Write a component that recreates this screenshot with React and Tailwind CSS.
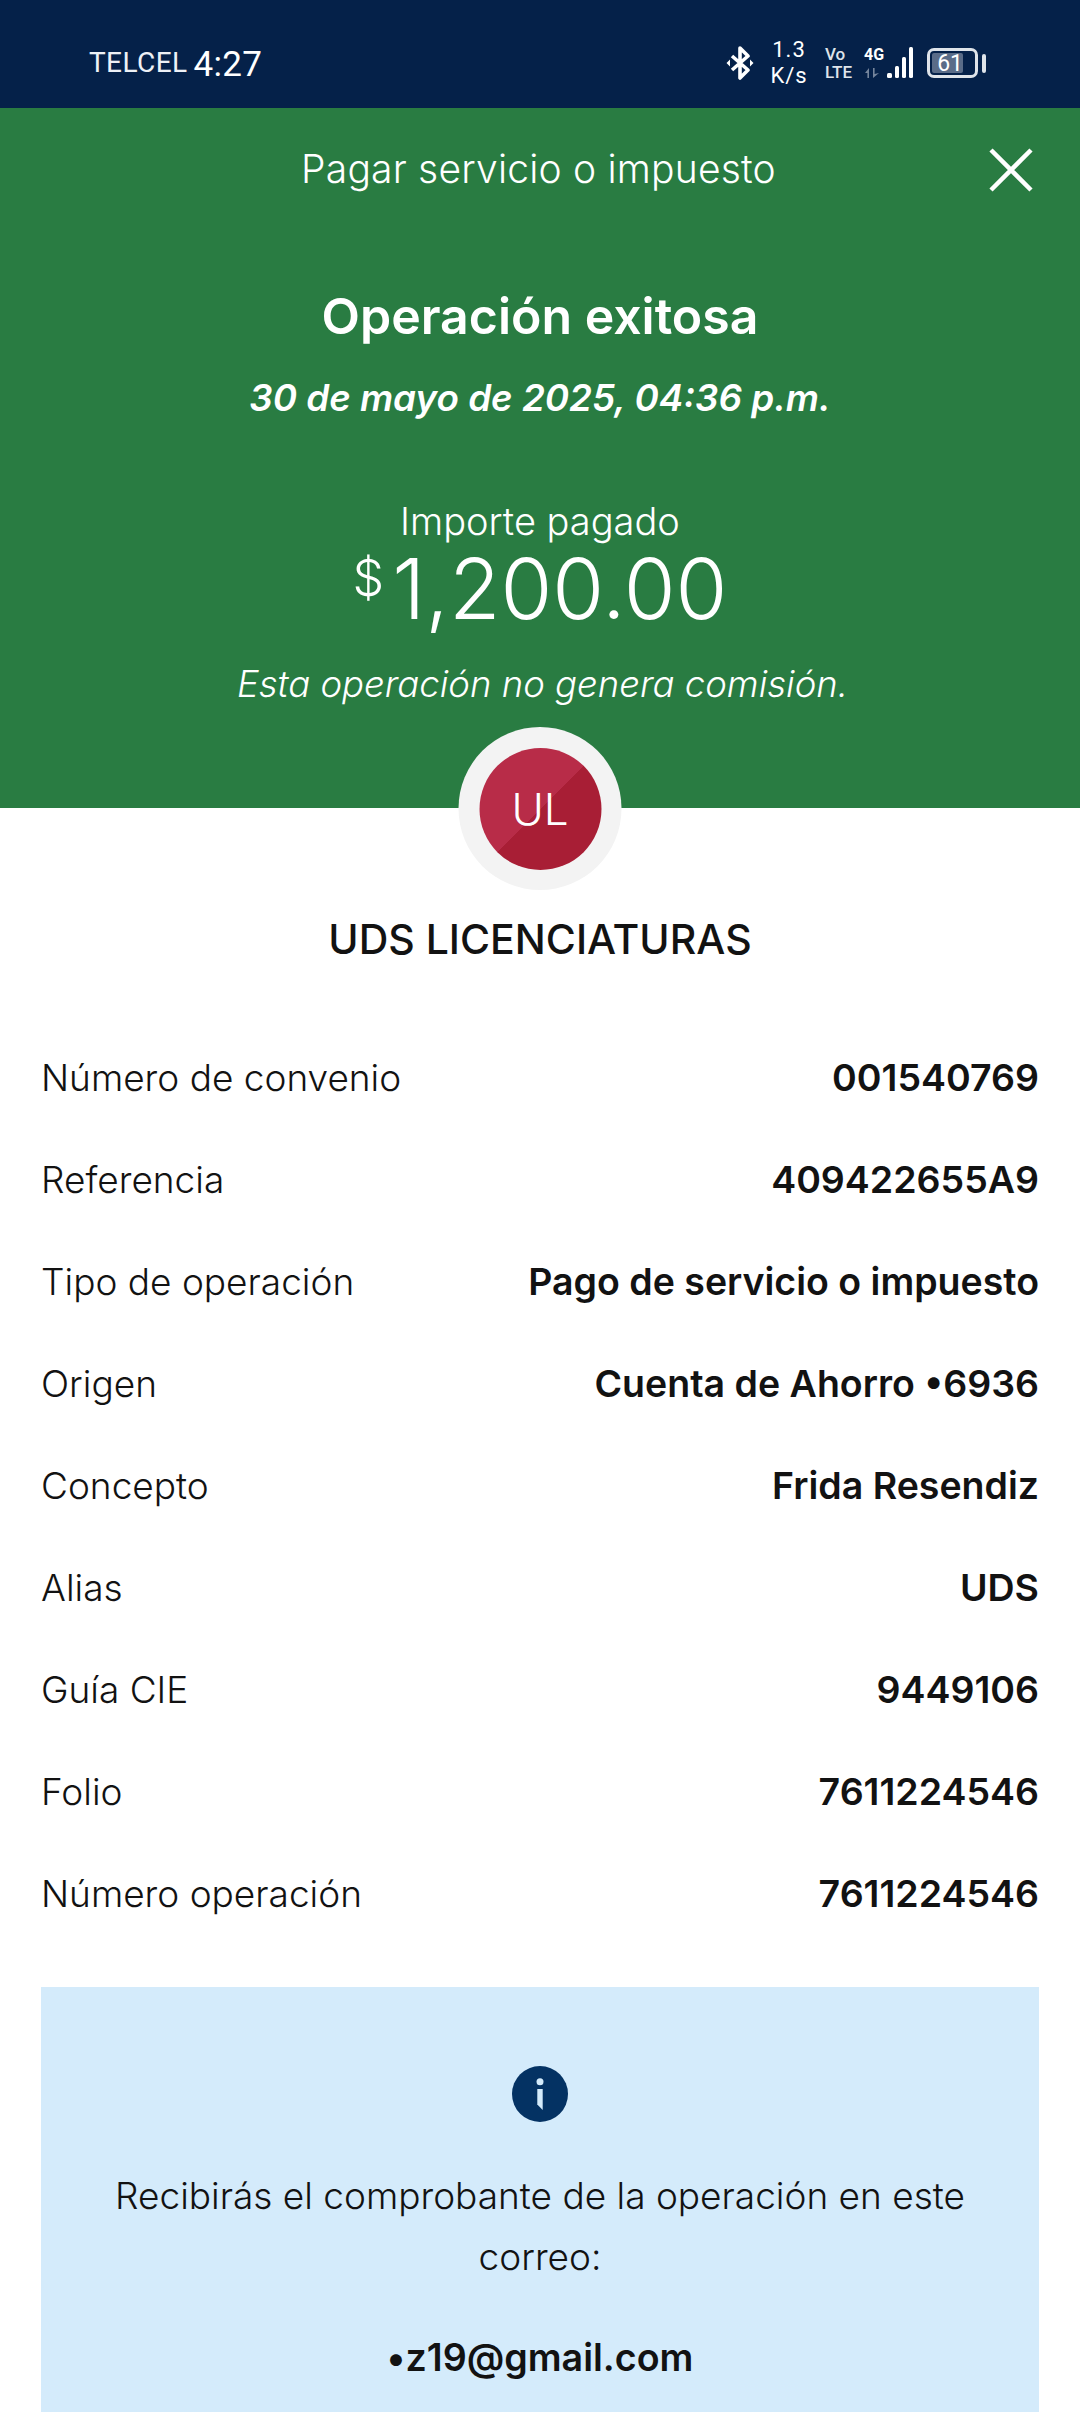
import React from 'react';

const rows = [
  ['Número de convenio', '001540769'],
  ['Referencia', '409422655A9'],
  ['Tipo de operación', 'Pago de servicio o impuesto'],
  ['Origen', 'Cuenta de Ahorro •6936'],
  ['Concepto', 'Frida Resendiz'],
  ['Alias', 'UDS'],
  ['Guía CIE', '9449106'],
  ['Folio', '7611224546'],
  ['Número operación', '7611224546'],
];

const StatusBar = () => (
  <div className="h-[108px] bg-[#052149] flex items-center justify-between pt-[18px] pl-[89px] pr-[94px] text-white font-['Roboto',sans-serif]">
    <div className="flex items-center gap-[6px]">
      <span className="text-[28px] leading-[40px] tracking-[0.4px] text-[#eef1f6]">TELCEL</span>
      <span className="text-[35px] leading-[40px] tracking-[0.3px] mt-[3px]">4:27</span>
    </div>
    <div className="flex items-center">
      <svg width="28" height="34" viewBox="0 0 28 34" fill="none" stroke="white" strokeWidth="3.6" strokeLinejoin="round">
        <path d="M6 10 L22 24 L14 32 V2 L22 10 L6 24" />
        <path d="M0.5 17 L4 13.5 V20.5 Z M27.5 17 L24 13.5 V20.5 Z" fill="white" stroke="none" />
      </svg>
      <div className="ml-[16px] w-[38px] flex flex-col items-center text-[22px] leading-[26px] tracking-[1px] whitespace-nowrap">
        <span>1.3</span>
        <span>K/s</span>
      </div>
      <div className="ml-[17px] w-[28px] flex flex-col items-start text-[17px] font-medium leading-[18px] text-[#dfe4ea]">
        <span>Vo</span>
        <span>LTE</span>
      </div>
      <div className="ml-[11px] relative w-[49px] h-[36px]">
        <span className="absolute left-0 top-[1px] text-[16px] font-bold leading-[18px]">4G</span>
        <svg className="absolute left-0 top-0" width="49" height="36" viewBox="0 0 49 36" fill="white">
          <path d="M1 28 L5 23 L5 33 H3.4 V28 Z M9 23 H10.6 V29 L15 28 L9 33 Z" fill="#75859c" />
          <rect x="23" y="28" width="5" height="5" rx="1.5" />
          <rect x="31" y="21" width="4" height="12" rx="1.5" />
          <rect x="38" y="12" width="4" height="21" rx="1.5" />
          <rect x="45" y="2" width="4" height="31" rx="1.5" />
        </svg>
      </div>
      <div className="ml-[14px] w-[51px] h-[30px] rounded-[7px] border-[3px] border-[#dfe4ea] p-[2px] flex">
        <div className="w-[31px] h-full rounded-[2px] bg-[#5a6c88] flex items-center justify-end text-[23px] leading-none">
          61
        </div>
      </div>
      <div className="ml-[4px] w-[4px] h-[19px] rounded-full bg-[#dfe4ea]" />
    </div>
  </div>
);

const Header = () => (
  <div className="relative bg-[#297c42] h-[700px] flex flex-col items-center text-white">
    <div className="mt-[38px] pr-[3px] text-[39px] leading-[46px] font-light tracking-[0.2px]">Pagar servicio o impuesto</div>
    <svg className="absolute right-[47px] top-[40px]" width="44" height="44" viewBox="0 0 44 44" stroke="white" strokeWidth="4.5">
      <path d="M2 2 L42 42 M42 2 L2 42" />
    </svg>
    <div className="mt-[94px] text-[50px] leading-[60px] font-semibold">Operación exitosa</div>
    <div className="mt-[30px] text-[36.8px] leading-[44px] font-semibold italic">30 de mayo de 2025, 04:36 p.m.</div>
    <div className="mt-[79px] text-[38px] leading-[44px] font-light">Importe pagado</div>
    <div className="h-[92px] flex items-start font-light">
      <span className="text-[50px] leading-[70px] mr-[8px]">$</span>
      <span className="text-[84px] leading-[92px]">1,200.00</span>
    </div>
    <div className="mt-[27px] pl-[5px] text-[36.5px] leading-[44px] font-light italic">Esta operación no genera comisión.</div>
    <div className="absolute left-1/2 bottom-[-82px] -translate-x-1/2 w-[163px] h-[163px] rounded-full bg-[#f3f3f3] flex items-center justify-center">
      <div className="w-[122px] h-[122px] rounded-full bg-[linear-gradient(135deg,#b82c48_50%,#a81e35_50%)] flex items-center justify-center text-[44px] font-light">
        UL
      </div>
    </div>
  </div>
);

export default function App() {
  return (
    <div className="w-[1080px] h-[2412px] overflow-hidden bg-white text-[#121212] font-['Inter',sans-serif]">
      <StatusBar />
      <Header />
      <div className="mt-[105px] text-center text-[41px] leading-[52px] font-medium">UDS LICENCIATURAS</div>
      <div className="mt-[62px] px-[41px]">
        {rows.map(([label, value]) => (
          <div key={label} className="h-[102px] flex items-center justify-between">
            <span className="text-[37px] font-light">{label}</span>
            <span className="text-[37.5px] font-semibold">{value}</span>
          </div>
        ))}
      </div>
      <div className="mt-[42px] mx-[41px] h-[500px] bg-[#d4ebfb] flex flex-col items-center pt-[79px]">
        <svg width="56" height="56" viewBox="0 0 56 56">
          <circle cx="28" cy="28" r="28" fill="#043263" />
          <circle cx="28" cy="15.7" r="3.5" fill="#d4ebfb" />
          <path d="M25.3 23 H30.7 V44 L25.3 38.5 Z" fill="#d4ebfb" />
        </svg>
        <p className="mt-[43px] w-[900px] text-center text-[37px] leading-[61px] font-light">
          Recibirás el comprobante de la operación en este correo:
        </p>
        <p className="mt-[46px] text-[37.6px] leading-[50px] font-semibold">•z19@gmail.com</p>
      </div>
    </div>
  );
}
